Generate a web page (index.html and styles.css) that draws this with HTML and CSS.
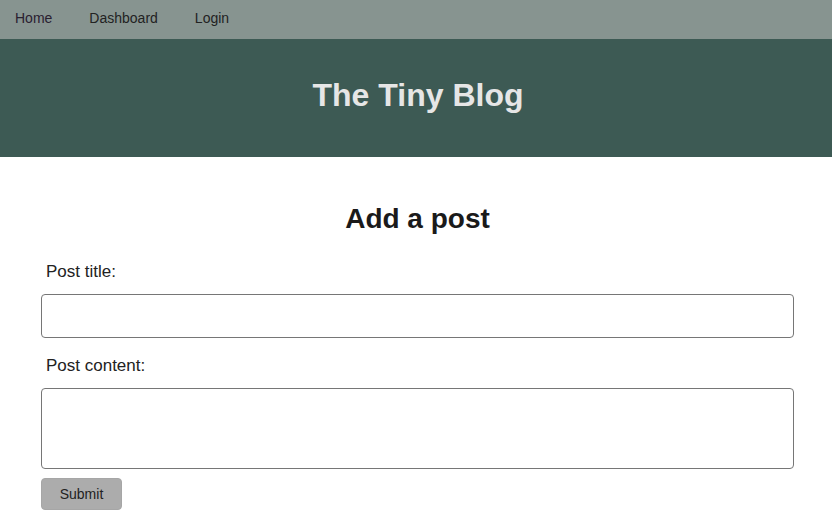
FILE: index.html
```html
<!DOCTYPE html>
<html>
<head>
<meta charset="utf-8">
<link rel="stylesheet" href="styles.css">
</head>
<body>
<nav class="nav">
  <a class="nav-link visited" href="#">Home</a>
  <a class="nav-link" href="#">Dashboard</a>
  <a class="nav-link" href="#">Login</a>
</nav>
<header class="banner">
  <h1 class="banner-title">The Tiny Blog</h1>
</header>
<main class="main">
  <h2 class="page-title">Add a post</h2>
  <form class="post-form">
    <label class="field-label first" for="title">Post title:</label>
    <input class="field-input" id="title" type="text">
    <label class="field-label second" for="content">Post content:</label>
    <textarea class="field-textarea" id="content"></textarea>
    <button class="submit-btn" type="button">Submit</button>
  </form>
</main>
</body>
</html>
```
FILE: styles.css
```css
* { box-sizing: border-box; }
html, body { margin: 0; padding: 0; background: #fff; }
body { font-family: "Liberation Sans", Arial, sans-serif; color: #1a1a1a; }

.nav {
  height: 39px;
  background: #879490;
  display: flex;
  align-items: center;
  gap: 37px;
  padding-left: 15px;
}
.nav-link {
  font-size: 14px;
  color: #222;
  text-decoration: none;
  padding-bottom: 3px;
}
.nav-link.visited { color: #2a2030; }

.banner {
  height: 118px;
  background: #3d5a54;
  display: flex;
  align-items: center;
  justify-content: center;
}
.banner-title {
  margin: 0 0 6px 0;
  font-size: 32px;
  font-weight: bold;
  color: #e6e6e6;
  padding-left: 4px;
}

.main {
  padding: 0 38px 0 41px;
}
.page-title {
  margin: 0;
  padding-top: 46px;
  font-size: 28px;
  font-weight: bold;
  text-align: center;
  line-height: 32px;
  color: #1a1a1a;
}
.post-form {
  display: flex;
  flex-direction: column;
  align-items: flex-start;
}
.field-label {
  font-size: 17px;
  color: #222;
  padding-left: 5px;
  line-height: 20px;
}
.field-label.first { margin: 27px 0 12px; }
.field-label.second { margin: 18px 0 12px; }
.field-input {
  width: 100%;
  height: 44px;
  border: 1px solid #767676;
  border-radius: 4px;
  margin: 0;
}
.field-textarea {
  width: 100%;
  height: 81px;
  border: 1px solid #767676;
  border-radius: 4px;
  resize: none;
  margin: 0;
}
.submit-btn {
  margin-top: 9px;
  width: 81px;
  height: 32px;
  background: #acacac;
  border: 1px solid #a6a6a6;
  border-radius: 4px;
  font-family: "Liberation Sans", Arial, sans-serif;
  font-size: 14px;
  color: #222;
}
```
